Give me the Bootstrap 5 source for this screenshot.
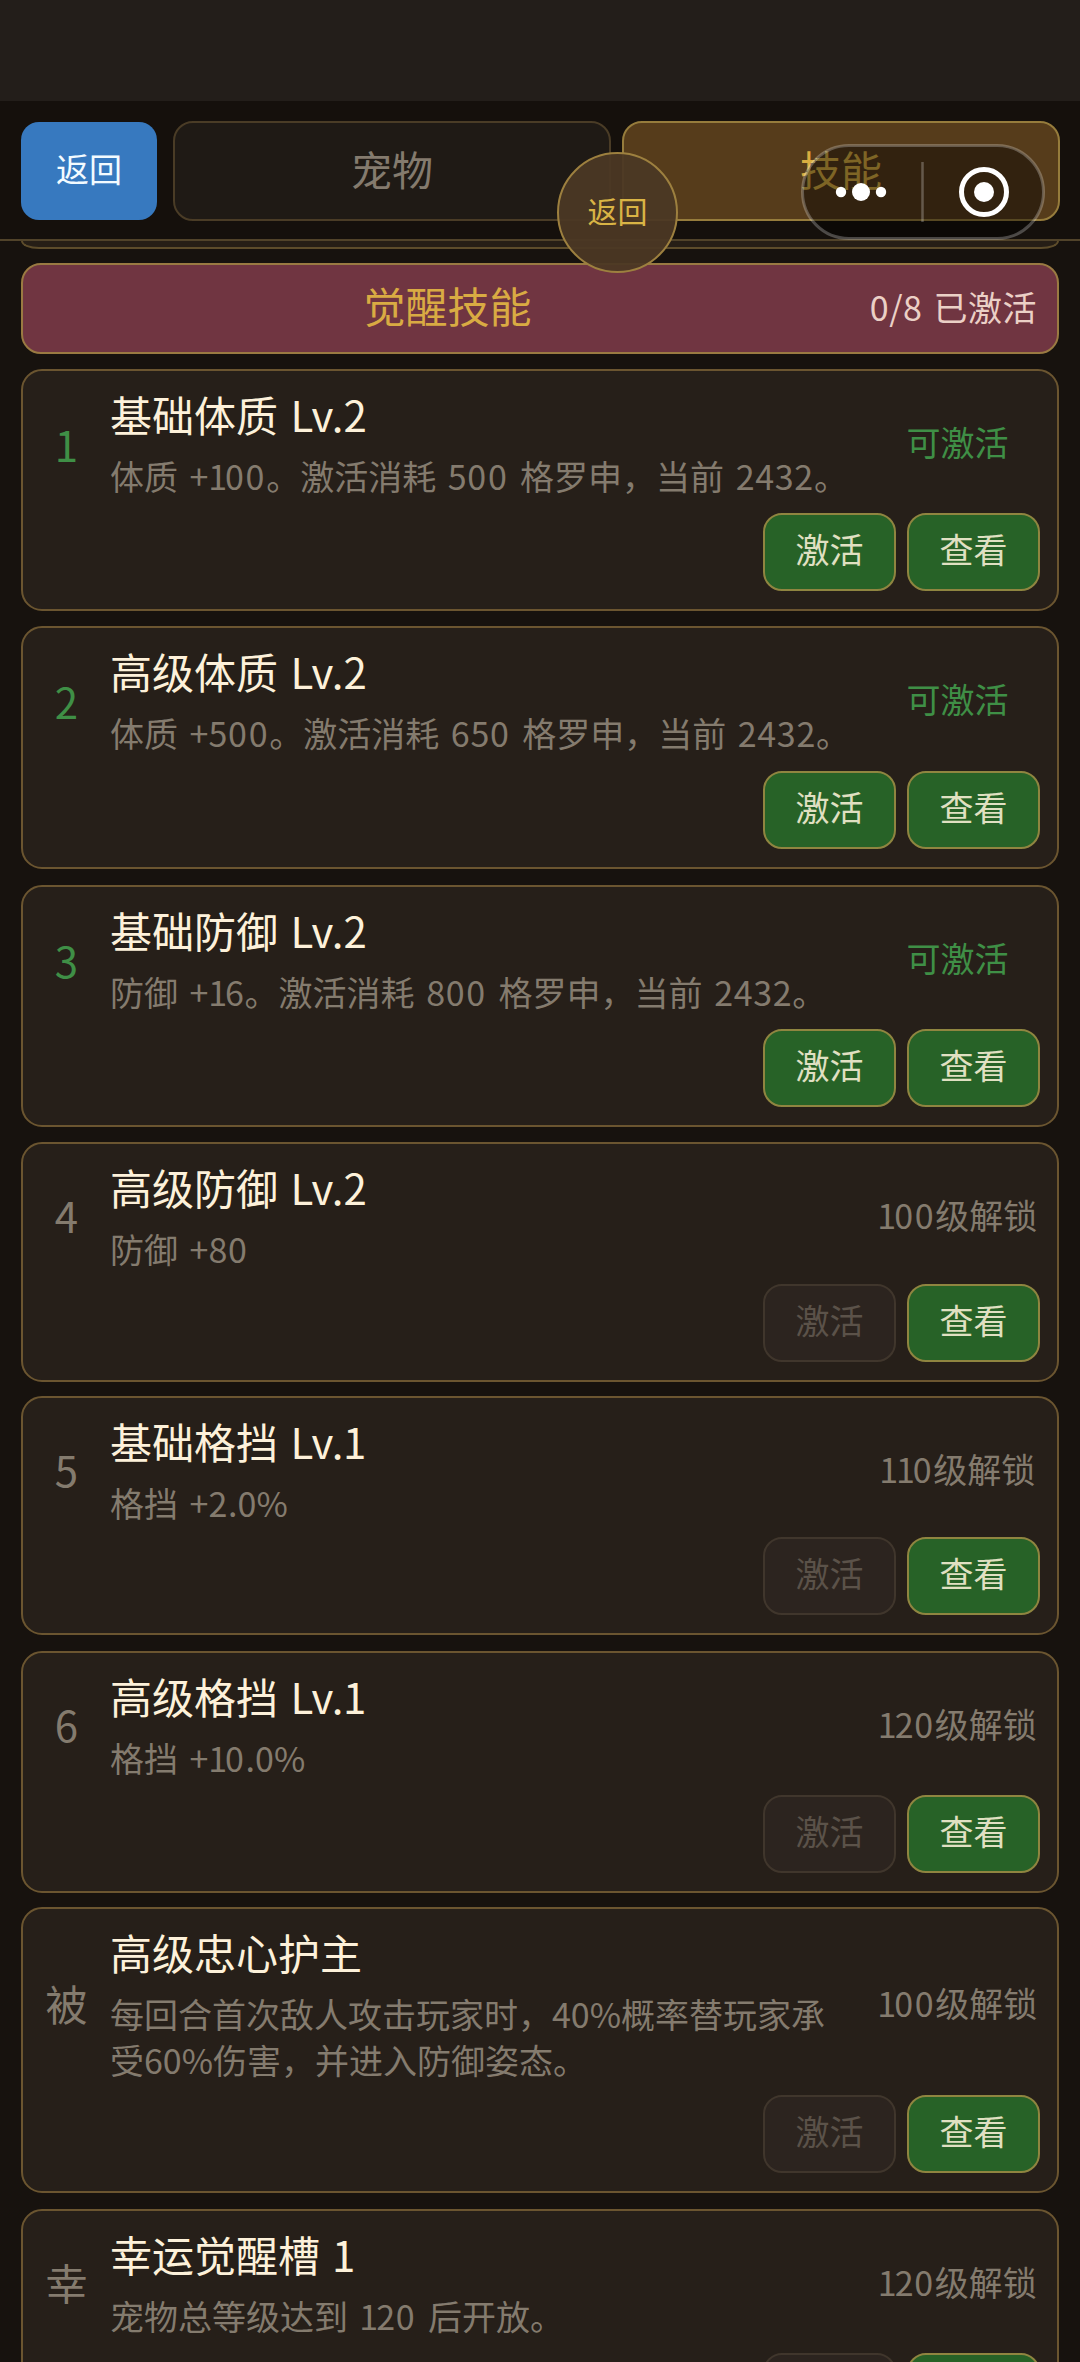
<!DOCTYPE html>
<html lang="zh-CN">
<head>
<meta charset="utf-8">
<meta name="viewport" content="width=device-width, initial-scale=1">
<title>觉醒技能</title>
<link href="https://cdn.jsdelivr.net/npm/bootstrap@5.3.0/dist/css/bootstrap.min.css" rel="stylesheet">
<style>
  html, body { height: 2362px; overflow: hidden; }
  body { background: #17120e; font-family: "Noto Sans CJK SC", sans-serif; font-size: 34px; line-height: 46px; color: #847b6e; }
  .statusbar { height: 101px; background: #231e1a; }
  .topnav { height: 140px; padding: 20px 20px 18px 21px; border-bottom: 2px solid #51432a; background: #15100c; }
  .btn-back { width: 136px; height: 98px; margin: 1px 16px 1px 0; padding: 0 0 6px; border: 0; border-radius: 18px; background: #3779bf; color: #f3fbff; font-size: 33px; }
  .tab-item { height: 100px; padding-bottom: 6px; border: 2px solid #4a3c26; border-radius: 20px; background: #1f1a15; color: #847b6e; font-size: 41px; }
  .tab-item.active { background: #563c1b; border-color: #967c3c; color: #d9ae40; }
  .list-area { padding: 0 21px; }
  .prev-card { height: 8px; border: 2px solid #5d4c2b; border-top: 0; border-radius: 0 0 18px 18px / 0 0 8px 8px; background: #261e16; margin-bottom: 14px; }
  .banner { height: 91px; border: 2px solid #9a7a42; border-radius: 20px; background: #703541; padding: 0 20px 4px 0; margin-bottom: 15px; }
  .banner-title { color: #d9ab43; font-size: 42px; padding: 0 0 3px 2px; }
  .banner-count { color: #ebd0c6; letter-spacing: .5px; word-spacing: 3px; }
  .skill { border: 2px solid #6b5530; border-radius: 21px; background: #261f19; padding: 18px 17px 18px 11px; }
  .skill-no { width: 65px; font-size: 42px; padding-bottom: 4px; }
  .skill-no.can { padding-bottom: 1px; }
  .skill-body { padding: 0 21px 0 11px; }
  .skill-name { color: #fdf1da; font-size: 42px; line-height: 49px; margin-bottom: 15px; word-spacing: 3px; }
  .skill-desc { word-spacing: 4px; }
  .skill-state { width: 167px; padding: 0 0 5px 2px; white-space: nowrap; }
  .d0 { letter-spacing: .05em; }
  .d1 { letter-spacing: -.06em; margin-left: -.01em; }
  .dn { letter-spacing: .02em; }
  .can { color: #3f8f46; }
  .skill-btn { width: 133px; height: 78px; padding: 0 0 6px; border: 2px solid #8f8540; border-radius: 19px; background: #276227; color: #e0e0c2; font-size: 34px; }
  .skill-btn:disabled { background: #2c241f; border-color: #40362c; color: #5b5249; }
  .btn-row { gap: 11px; }
  .float-back { left: 557px; top: 152px; width: 121px; height: 121px; padding-bottom: 5px; border: 2px solid #9d803f; background: rgba(75,56,36,.95); color: #d9b445; font-size: 30px; }
  .capsule { left: 801px; top: 144px; }
</style>
</head>
<body class="position-relative">
<div class="statusbar"></div>
<nav class="topnav d-flex">
  <button class="btn-back flex-shrink-0">返回</button>
  <div class="d-flex flex-grow-1" style="gap:11px">
    <div class="tab-item flex-fill d-flex align-items-center justify-content-center">宠物</div>
    <div class="tab-item active flex-fill d-flex align-items-center justify-content-center">技能</div>
  </div>
</nav>
<main class="list-area">
  <div class="prev-card"></div>
  <div class="banner d-flex align-items-center">
    <div class="banner-title flex-grow-1 text-center">觉醒技能</div>
    <div class="banner-count">0/8 已激活</div>
  </div>
  <div id="skills"></div>
</main>
<div class="float-back position-absolute rounded-circle d-flex align-items-center justify-content-center">返回</div>
<svg class="capsule position-absolute" width="244" height="96" viewBox="0 0 244 96">
  <rect x="1.5" y="1.5" width="241" height="93" rx="46.5" fill="#000" fill-opacity=".42" stroke="#fff" stroke-opacity=".25" stroke-width="3"/>
  <g fill="#fff"><circle cx="40" cy="48" r="5.2"/><circle cx="60" cy="48" r="9"/><circle cx="80" cy="48" r="5.2"/><circle cx="183" cy="48" r="10"/></g>
  <circle cx="183" cy="48" r="22.5" fill="none" stroke="#fff" stroke-width="5"/>
  <path d="M121.500 18v60" stroke="#fff" stroke-opacity=".25" stroke-width="2.500"/>
</svg>
<script src="https://cdn.jsdelivr.net/npm/bootstrap@5.3.0/dist/js/bootstrap.bundle.min.js"></script>
<script>
  // number, name, description, state, can be activated, card height, gap below
  const skills = [
    ['1', '基础体质 Lv.2', '体质 +100。激活消耗 500 格罗申，当前 2432。', '可激活', true, 242, 15],
    ['2', '高级体质 Lv.2', '体质 +500。激活消耗 650 格罗申，当前 2432。', '可激活', true, 243, 16],
    ['3', '基础防御 Lv.2', '防御 +16。激活消耗 800 格罗申，当前 2432。', '可激活', true, 242, 15],
    ['4', '高级防御 Lv.2', '防御 +80', '100级解锁', false, 240, 14],
    ['5', '基础格挡 Lv.1', '格挡 +2.0%', '110级解锁', false, 239, 16],
    ['6', '高级格挡 Lv.1', '格挡 +10.0%', '120级解锁', false, 242, 14],
    ['被', '高级忠心护主', '每回合首次敌人攻击玩家时，40%概率替玩家承受60%伤害，并进入防御姿态。', '100级解锁', false, 286, 16],
    ['幸', '幸运觉醒槽 1', '宠物总等级达到 120 后开放。', '120级解锁', false, 242, 0]
  ];
  // proportional figures: a wide zero and a narrow one; figures before % stay tight
  const fig = s => s.replace(/0+(?!%|0)|1|[2-9]+(?!0?%)/g, m =>
    `<span class="${m[0] === '0' ? 'd0' : m === '1' ? 'd1' : 'dn'}">${m}</span>`);
  document.getElementById('skills').innerHTML = skills.map(([no, name, desc, state, can, h, gap]) => `
    <section class="skill d-flex flex-column justify-content-between" style="height:${h}px;margin-bottom:${gap}px">
      <div class="d-flex align-items-center">
        <div class="skill-no text-center flex-shrink-0 ${can ? 'can' : ''}">${no}</div>
        <div class="skill-body flex-grow-1">
          <div class="skill-name">${fig(name)}</div>
          <div class="skill-desc">${fig(desc)}</div>
        </div>
        <div class="skill-state text-center flex-shrink-0 ${can ? 'can' : ''}">${fig(state)}</div>
      </div>
      <div class="btn-row d-flex justify-content-end">
        <button class="skill-btn" ${can ? '' : 'disabled'}>激活</button>
        <button class="skill-btn">查看</button>
      </div>
    </section>`).join('');
</script>
</body>
</html>
